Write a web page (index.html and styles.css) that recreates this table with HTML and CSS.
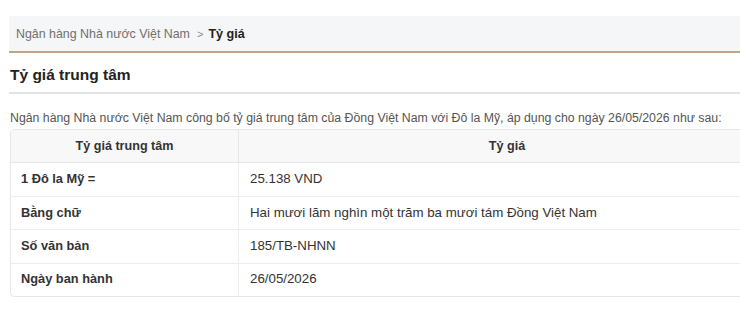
FILE: index.html
```html
<!DOCTYPE html>
<html lang="vi">
<head>
<meta charset="utf-8">
<link rel="stylesheet" href="styles.css">
</head>
<body>
<div class="page">
  <nav class="crumbs">
    <span class="crumb-link">Ngân hàng Nhà nước Việt Nam</span>
    <span class="crumb-sep">&gt;</span>
    <span class="crumb-current">Tỷ giá</span>
  </nav>
  <h1 class="title">Tỷ giá trung tâm</h1>
  <p class="intro">Ngân hàng Nhà nước Việt Nam công bố tỷ giá trung tâm của Đồng Việt Nam với Đô la Mỹ, áp dụng cho ngày 26/05/2026 như sau:</p>
  <table class="rates">
    <thead>
      <tr><th class="c1">Tỷ giá trung tâm</th><th class="c2">Tỷ giá</th></tr>
    </thead>
    <tbody>
      <tr><td class="label">1 Đô la Mỹ =</td><td>25.138 VND</td></tr>
      <tr><td class="label">Bằng chữ</td><td>Hai mươi lăm nghìn một trăm ba mươi tám Đồng Việt Nam</td></tr>
      <tr><td class="label">Số văn bản</td><td>185/TB-NHNN</td></tr>
      <tr><td class="label">Ngày ban hành</td><td>26/05/2026</td></tr>
    </tbody>
  </table>
</div>
</body>
</html>
```
FILE: styles.css
```css
html, body {
  margin: 0;
  padding: 0;
  background: #ffffff;
  overflow: hidden;
}
body {
  font-family: "Liberation Sans", Arial, sans-serif;
  color: #333;
}
.page {
  width: 770px;
  padding: 16px 0 0 9px;
}
.crumbs {
  height: 35px;
  background: #f5f6f7;
  border-bottom: 2px solid #bda588;
  display: flex;
  align-items: center;
  padding-left: 7px;
  font-size: 12.4px;
  white-space: nowrap;
}
.crumb-link {
  color: #707070;
}
.crumb-sep {
  color: #8a8a8a;
  font-size: 11px;
  margin: 0 5px 0 7px;
}
.crumb-current {
  color: #222;
  font-weight: bold;
  font-size: 12.6px;
}
.title {
  margin: 0;
  height: 39px;
  line-height: 44px;
  padding-left: 1px;
  font-size: 15.5px;
  font-weight: bold;
  color: #222;
  border-bottom: 2px solid #e3e3e3;
}
.intro {
  margin: 17px 0 0 1px;
  font-size: 12.3px;
  line-height: 15px;
  color: #555;
  white-space: nowrap;
}
.rates {
  margin: 3px 0 0 1px;
  width: 766px;
  border-collapse: separate;
  border-spacing: 0;
  border: 1px solid #e6e6e6;
  border-radius: 4px;
  color: #333;
}
.rates th {
  background: #f8f8f8;
  height: 32px;
  padding: 0;
  font-weight: bold;
  font-size: 12.6px;
  text-align: center;
  border-bottom: 1px solid #e6e6e6;
}
.rates th.c1 {
  width: 227px;
  border-right: 1px solid #e6e6e6;
}
.rates td {
  height: 30.4px;
  padding: 0 0 2px 11px;
  border-top: 1px solid #ededed;
  font-size: 13.3px;
}
.rates tbody tr:first-child td {
  border-top: none;
  height: 31px;
}
.rates td.label {
  font-weight: bold;
  font-size: 12.8px;
  padding-left: 10px;
  border-right: 1px solid #ededed;
}
```
